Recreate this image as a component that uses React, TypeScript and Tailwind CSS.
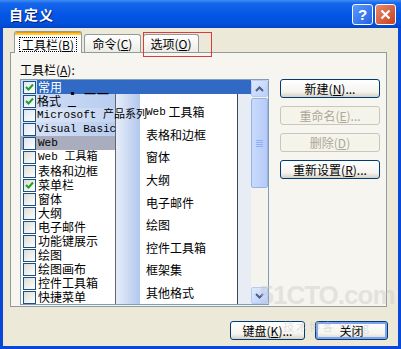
import React from "react";

function Check({ checked, tint }: { checked?: boolean; tint?: boolean }) {
  return (
    <div
      className={`w-[13px] h-[13px] border border-[#1C5180] flex items-center justify-center shrink-0 ${
        tint ? "bg-[linear-gradient(135deg,#DCE6F4,#FFFFFF)]" : "bg-[linear-gradient(135deg,#DCDCD7,#FFFFFF)]"
      }`}
    >
      {checked && (
        <svg width="9" height="9" viewBox="0 0 9 9">
          <path d="M1 4 L3.5 6.5 L8 1.5" stroke="#21A121" strokeWidth="2" fill="none" />
        </svg>
      )}
    </div>
  );
}

function Btn({
  children,
  disabled,
  def,
  className = "",
}: {
  children: React.ReactNode;
  disabled?: boolean;
  def?: boolean;
  className?: string;
}) {
  return (
    <div
      className={`h-[19px] rounded-[3px] border flex items-center justify-center text-[12px] leading-none ${
        disabled
          ? "border-[#C9C7BA] bg-[#F5F4EA] text-[#ACA899]"
          : "border-[#003C74] bg-[linear-gradient(180deg,#FFFFFF_0%,#F4F3EE_70%,#D6D0C5_100%)] text-black"
      } ${def ? "shadow-[inset_0_0_0_2px_#7DA2F0]" : ""} ${className}`}
    >
      {children}
    </div>
  );
}

const leftRows: { label: string; checked?: boolean; mono?: boolean; bg?: string; extra?: React.ReactNode }[] = [
  {
    label: "格式",
    checked: true,
    bg: "bg-[linear-gradient(90deg,#D3E0F6,#B8CDF1)]",
    extra: <span className="ml-[6px] text-[11px] tracking-[2px]">▪ ━━  ☰</span>,
  },
  { label: "Microsoft 产品系列", mono: true, bg: "bg-[linear-gradient(90deg,#E3EAF7,#C4D5F2)]" },
  { label: "Visual Basic", mono: true, bg: "bg-[linear-gradient(90deg,#D9E3F6,#B9CDF0)]" },
  { label: "Web", mono: true, bg: "bg-[#A9ADBE]" },
  { label: "Web 工具箱", mono: true },
  { label: "表格和边框" },
  { label: "菜单栏", checked: true },
  { label: "窗体" },
  { label: "大纲" },
  { label: "电子邮件" },
  { label: "功能键展示" },
  { label: "绘图" },
  { label: "绘图画布" },
  { label: "控件工具箱" },
  { label: "快捷菜单" },
];

const midItems = ["Web 工具箱", "表格和边框", "窗体", "大纲", "电子邮件", "绘图", "控件工具箱", "框架集", "其他格式"];

function Arrow({ up }: { up?: boolean }) {
  return (
    <div className="w-[17px] h-[17px] rounded-[2px] border border-[#B7CAF5] bg-[linear-gradient(135deg,#E0EAFE,#B9CEFB)] flex items-center justify-center">
      <svg width="9" height="6" viewBox="0 0 9 6">
        <path d={up ? "M1 5 L4.5 1.5 L8 5" : "M1 1 L4.5 4.5 L8 1"} stroke="#4D6185" strokeWidth="2" fill="none" />
      </svg>
    </div>
  );
}

export default function App() {
  return (
    <div className="w-[401px] h-[349px] overflow-hidden bg-[#0848D8] flex flex-col font-['SimSun','Noto_Sans_CJK_SC',sans-serif] text-[12px] text-black">
      {/* title bar */}
      <div className="h-[28px] shrink-0 flex items-center bg-[linear-gradient(180deg,#3F8CF3_0%,#1666EC_12%,#0556E5_50%,#0151DD_85%,#0043C4_100%)] pl-[9px] pr-[5px]">
        <span className="text-white font-bold text-[14px] tracking-[1px] [text-shadow:1px_1px_0_#0A1E6E] font-['Noto_Sans_CJK_SC',sans-serif]">
          自定义
        </span>
        <div className="ml-auto flex gap-[2px]">
          <div className="w-[21px] h-[21px] rounded-[3px] border border-white bg-[linear-gradient(135deg,#5A9BFF,#2462E0)] flex items-center justify-center text-white font-bold text-[15px] leading-none font-['Liberation_Sans',sans-serif]">
            ?
          </div>
          <div className="w-[21px] h-[21px] rounded-[3px] border border-white bg-[linear-gradient(135deg,#E88A6E,#C6401E)] flex items-center justify-center">
            <svg width="11" height="11" viewBox="0 0 11 11">
              <path d="M1.5 1.5 L9.5 9.5 M9.5 1.5 L1.5 9.5" stroke="white" strokeWidth="2.2" />
            </svg>
          </div>
        </div>
      </div>

      {/* body */}
      <div className="flex-1 mx-[3px] mb-[3px] bg-[#ECE9D8] relative flex flex-col">
        {/* tabs */}
        <div className="h-[21px] mt-[3px] ml-[11px] flex items-end relative z-10">
          <div className="h-[22px] mb-[-1px] w-[68px] border border-b-0 border-[#919B9C] rounded-t-[3px] bg-[#FCFCFE] flex flex-col">
            <div className="h-[3px] rounded-t-[2px] bg-[#FFC83C] border-t border-[#E69A00]" />
            <div className="flex-1 flex items-center justify-center">
              <span className="border border-dotted border-black px-[2px] leading-[13px]">
                工具栏(<span className="underline">B</span>)
              </span>
            </div>
          </div>
          <div className="h-[18px] ml-[2px] w-[57px] border border-b-0 border-[#919B9C] rounded-t-[3px] bg-[linear-gradient(180deg,#FFFFFF,#ECEBE5)] flex items-center justify-center">
            命令(<span className="underline">C</span>)
          </div>
          <div className="h-[18px] ml-[2px] w-[56px] border border-b-0 border-[#919B9C] rounded-t-[3px] bg-[linear-gradient(180deg,#FFFFFF,#ECEBE5)] flex items-center justify-center">
            选项(<span className="underline">O</span>)
          </div>
        </div>

        {/* panel */}
        <div className="ml-[7px] w-[377px] h-[255px] border border-[#919B9C] bg-[#F6F5F0] pl-[9px] pt-[9px] flex flex-col">
          <div className="h-[17px] leading-[15px]">
            工具栏(<span className="underline">A</span>):
          </div>
          <div className="flex">
            {/* list box */}
            <div className="w-[249px] h-[226px] border border-[#7F9DB9] bg-white flex">
              <div className="flex-1 flex flex-col">
                <div className="h-[14px] flex items-center bg-[linear-gradient(90deg,#C9D9F4,#D8E3F6)]">
                  <div className="w-[16px] pl-[2px]">
                    <Check checked tint />
                  </div>
                  <div className="flex-1 h-[14px] bg-[#316AC5] text-white leading-[14px] pl-[1px]">常用</div>
                </div>
                <div className="flex h-[210px]">
                  <div className="w-[94px] flex flex-col relative z-[5]">
                    {leftRows.map((r) => (
                      <div key={r.label} className={`h-[14px] flex items-center ${r.bg ?? ""}`}>
                        <div className="w-[16px] pl-[2px]">
                          <Check checked={r.checked} tint={!!r.bg} />
                        </div>
                        <span
                          className={`whitespace-nowrap leading-[14px] pl-[1px] ${
                            r.mono ? "font-['Liberation_Mono','Noto_Sans_CJK_SC',monospace] text-[11px]" : ""
                          }`}
                        >
                          {r.label}
                        </span>
                        {r.extra}
                      </div>
                    ))}
                  </div>
                  <div className="w-[1px] bg-[#5F6670]" />
                  <div className="w-[24px] bg-[linear-gradient(90deg,#E6EDF8,#B3C8EE)]" />
                  <div className="w-[97px] bg-white pt-[7px] flex flex-col">
                    {midItems.map((m) => (
                      <div key={m} className="h-[22.75px] flex items-center pl-[6px] whitespace-nowrap">
                        {m.startsWith("Web") ? (
                          <>
                            <span className="font-['Liberation_Mono',monospace] text-[11px]">Web</span>&nbsp;工具箱
                          </>
                        ) : (
                          m
                        )}
                      </div>
                    ))}
                  </div>
                  <div className="w-[1px] bg-[#3C4656]" />
                  <div className="flex-1 bg-[#E7ECF5]" />
                </div>
              </div>
              {/* scrollbar */}
              <div className="w-[17px] flex flex-col bg-[#F4F3EE]">
                <Arrow up />
                <div className="mt-[1px] h-[90px] rounded-[2px] border border-[#98B1E6] bg-[linear-gradient(90deg,#C9DAFC,#B6CBF7)] flex items-center justify-center">
                  <div className="flex flex-col gap-[1px]">
                    <div className="w-[7px] h-[1px] bg-[#8CB0F8]" />
                    <div className="w-[7px] h-[1px] bg-[#8CB0F8]" />
                    <div className="w-[7px] h-[1px] bg-[#8CB0F8]" />
                    <div className="w-[7px] h-[1px] bg-[#8CB0F8]" />
                  </div>
                </div>
                <div className="flex-1" />
                <Arrow />
              </div>
            </div>

            {/* right buttons */}
            <div className="ml-[11px] w-[100px] flex flex-col">
              <Btn>
                新建(<span className="underline">N</span>)...
              </Btn>
              <Btn disabled className="mt-[8px]">
                重命名(<span className="underline">E</span>)...
              </Btn>
              <Btn disabled className="mt-[8px]">
                删除(<span className="underline">D</span>)
              </Btn>
              <Btn className="mt-[8px]">
                重新设置(<span className="underline">R</span>)...
              </Btn>
            </div>
          </div>
        </div>

        {/* bottom buttons */}
        <div className="flex justify-end gap-[10px] mt-[14px] mr-[10px]">
          <Btn className="w-[75px]">
            键盘(<span className="underline">K</span>)...
          </Btn>
          <Btn def className="w-[73px]">
            关闭
          </Btn>
        </div>

        {/* red annotation box */}
        <div className="absolute left-[140px] top-[4px] w-[69px] h-[25px] border border-[#E0393B] z-20" />

        {/* watermark */}
        <div className="absolute left-[262px] top-[254px] w-[124px] z-20 pointer-events-none opacity-40 flex flex-col items-center">
          <span className="font-['Liberation_Sans_Narrow','Liberation_Sans',sans-serif] font-bold text-[26px] leading-none text-[#C8C8C8] tracking-[-1px]">
            51CTO.com
          </span>
          <span className="mt-[10px] text-[11px] text-[#BDBDBD] tracking-[2px]">技术博客 Blog</span>
        </div>
      </div>
    </div>
  );
}
